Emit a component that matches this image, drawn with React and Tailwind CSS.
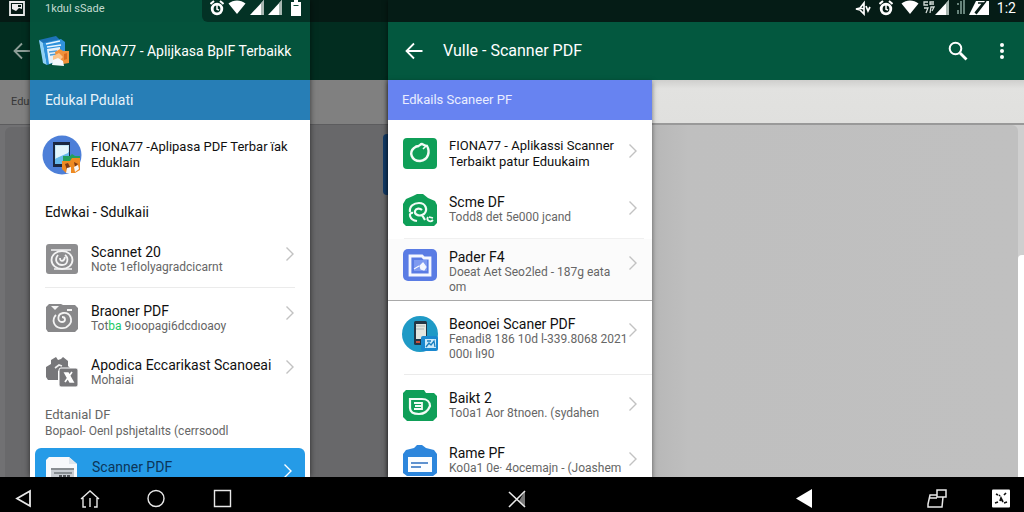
import React from "react";

// ── Small shared glyphs ──────────────────────────────────────────────────────
const Chevron = ({ className = "text-[#c2c2c2]" }) => (
  <svg viewBox="0 0 10 16" className={`h-4 w-2.5 ${className}`} fill="none" stroke="currentColor" strokeWidth="1.4">
    <path d="M1.5 1.5 8 8l-6.5 6.5" />
  </svg>
);

const BackArrow = ({ className }) => (
  <svg viewBox="0 0 18 18" className={`h-[18px] w-[18px] shrink-0 ${className}`} fill="none" stroke="currentColor" strokeWidth="1.8">
    <path d="M17.5 9H2M9 1.5 1.5 9 9 16.5" />
  </svg>
);

const AlarmIcon = () => (
  <svg viewBox="0 0 14 16" className="h-4 w-3.5" fill="none" stroke="currentColor">
    <circle cx="7" cy="9" r="4.8" strokeWidth="2.8" />
    <path d="M7 5v4.200l2 1" strokeWidth="1.5" />
    <path d="M0.500 4 4 1M13.500 4 10 1" strokeWidth="2" />
  </svg>
);

const WifiIcon = () => (
  <svg viewBox="0 0 18 14" className="h-3.5 w-[18px]" fill="currentColor">
    <path d="M0.5 3.5C5.500 -0.400 12.500 -0.400 17.500 3.500L9 14Z" />
  </svg>
);

const SignalIcon = () => (
  <svg viewBox="0 0 14 15" className="h-[15px] w-3.5">
    <path d="M14 0v15H0Z" fill="#fff" />
    <path d="M11 3.200 14 0v15h-3Z" fill="#a8b8b2" />
  </svg>
);

const BatteryIcon = () => (
  <svg viewBox="0 0 12 16" className="h-4 w-3" fill="currentColor">
    <path d="M4 0h4v2h3v14H1V2h3Z" />
    <path d="M3.500 5.500h5" stroke="#0b4a36" strokeWidth="1" />
  </svg>
);

// ── App icons ────────────────────────────────────────────────────────────────
const BooksLogo = () => (
  <svg viewBox="0 0 32 32" className="h-8 w-8 shrink-0">
    <path d="M1 5 18 1l3 3v20L7 29Z" fill="#1d73b8" />
    <path d="M1 5 5 8l4 22-4-2Z" fill="#8fd0f5" />
    <path d="m5 8 18-4 4 3v17L9 30Z" fill="#2f92dc" />
    <path d="m8 9 14-3M9 12l14-2" stroke="#e9f6ff" strokeWidth="1.6" />
    <path d="m9 14 13-2v13l-11 4Z" fill="#e5f1fa" />
    <path d="m11 17 8-1M12 20l7-1" stroke="#4b9cd8" strokeWidth="1.300" />
    <path d="m17 17 5-3 3 2h6v12l-12 2Z" fill="#f0913a" />
    <path d="m15 21 6-3 4 4-4 4-6-1Z" fill="#fbc48a" />
    <path d="m14 30 1-5 5-2 5 3 1 5Z" fill="#f3f8fd" />
    <path d="m26 19 3-1v6l-3 1Z" fill="#d86a20" />
  </svg>
);

const PhoneLogo = () => (
  <svg viewBox="0 0 40 40" className="h-10 w-10">
    <circle cx="20" cy="20" r="19.500" fill="#4d7fd8" />
    <path d="M11 7h17v25H11Z" fill="#1b2740" />
    <path d="M13 10h14v19H13Z" fill="#bfe6f7" />
    <path d="m13 24 14-7v12H13Z" fill="#67b9ea" />
    <path d="M14 11h12v7l-12 5Z" fill="#e4f5fb" />
    <path d="M21 21h7l2-2 3 2h5v8H21Z" fill="#23a05c" />
    <path d="M20 26h8l2-3h8v12l-5 3h-9l-4-4Z" fill="#ee8a22" />
    <path d="m23 29 3-1 2 4-3 3ZM32 27l4 2-3 3Z" fill="#7d3b16" />
    <path d="m25 33 4-1v6h-5ZM32 32l4-2 1 4-4 3Z" fill="#f5f7fb" />
  </svg>
);

const GrayLens = () => (
  <svg viewBox="0 0 32 30" className="h-[30px] w-8" fill="none" stroke="#f4f4f4">
    <rect width="32" height="30" rx="3" fill="#8e8e90" stroke="none" />
    <path d="M5 6h20M8 25h18" strokeWidth="1.300" />
    <ellipse cx="16" cy="16" rx="10.500" ry="9" strokeWidth="1.800" />
    <path d="M12 11c-4 5-1 10 4 10 6 0 7-7 3-10" strokeWidth="1.800" />
    <path d="M14 14c0 4 4 4 5-1" strokeWidth="1.800" />
  </svg>
);

const GraySpiral = () => (
  <svg viewBox="0 0 32 30" className="h-[30px] w-8" fill="none" stroke="#f4f4f4">
    <path d="M3 1h12l2 1h12l3 3v21l-3 3H2l-2-3V4Z" fill="#88888a" stroke="none" />
    <path d="M5 3h8l-4 4Z" fill="#f4f4f4" stroke="none" />
    <path d="M21 7h5" strokeWidth="2" />
    <path d="M16 14c4 0 4 5 0 5-5 0-5-8 1-9 8-1 10 8 6 12-4 5-13 4-15-2-1-3 0-6 2-8" strokeWidth="1.800" />
  </svg>
);

const GrayBoxes = () => (
  <svg viewBox="0 0 32 32" className="h-8 w-8">
    <path d="M0 10 5 7V3l5-3 2 3 3-1 2-2 5 4v5l2 2-12 3v9H2l-2-3Z" fill="#77777a" />
    <path d="m9 11 4-3 3 1" stroke="#eee" strokeWidth="1.600" fill="none" />
    <rect x="13" y="11" width="19" height="19" rx="2" fill="#77777a" stroke="#fff" strokeWidth="1" />
    <path d="M19 16h3l5 9h-3ZM26 15l-7 10" stroke="#fff" strokeWidth="1.700" fill="#fff" />
  </svg>
);

const DocumentIcon = () => (
  <svg viewBox="0 0 32 40" className="h-10 w-8">
    <path d="M3 0h20l8 7v33H0V3Z" fill="#f7f9fb" />
    <path d="M23 0v7h8Z" fill="#dfe6ec" />
    <path d="M5 11h23v24H5Z" fill="#c7ccd1" />
    <path d="M5 12h23M8 16h18" stroke="#74797d" strokeWidth="1.300" />
    <path d="M13 19h12" stroke="#55595d" strokeWidth="2" strokeDasharray="3 1" />
  </svg>
);

const GreenRing = () => (
  <svg viewBox="0 0 34 32" className="h-8 w-[34px]" fill="none">
    <rect y="1" width="34" height="31" rx="4" fill="#0f9f58" />
    <path d="M15 9c2 0 2-2 4-2 2 1 3 2 5 2 3 5 2 14-7 15-9 0-11-9-6-13 2-2 3-2 5-2" stroke="#f3fbf6" strokeWidth="2.400" />
    <path d="m20 12 3-3" stroke="#f3fbf6" strokeWidth="1.600" />
  </svg>
);

const GreenHouse = () => (
  <svg viewBox="0 0 34 32" className="h-8 w-[34px]" fill="none" stroke="#f3fbf6" strokeWidth="2.200">
    <path d="m0 10 3-5 7-3 4-2h6l5 4 7 3 2 4v18l-3 3H3l-3-3Z" fill="#0f9f58" stroke="none" />
    <path d="M14 27C6 26 5 18 10 19M7 18c-1-6 4-9 9-9 7 0 9 7 5 11-4 3-10 1-9-3 1-3 5-3 7-1M19 21l3 5" />
    <path d="M25 23c-2 3 2 6 5 3M26 23l4 1" strokeWidth="1.800" />
  </svg>
);

const BluePage = () => (
  <svg viewBox="0 0 34 32" className="h-8 w-[34px]">
    <rect width="34" height="32" rx="5" fill="#5a7ce4" />
    <path d="M7 7h12l2 2h6v17H7Z" fill="none" stroke="#f5f8ff" strokeWidth="2.800" />
    <path d="M11 11h13v11H11Z" fill="#7e9af0" />
    <path d="m11 20 5-3M17 17l3-3 3 4-2 3-3-1Z" stroke="#f5f8ff" strokeWidth="1.200" fill="#f5f8ff" />
  </svg>
);

const CyanPhone = () => (
  <svg viewBox="0 0 36 36" className="h-9 w-9">
    <circle cx="18" cy="18" r="18" fill="#1f9ac6" />
    <rect x="12" y="5" width="13" height="24" rx="1.500" fill="#243746" />
    <path d="M14 8h10v15H14Z" fill="#e3e6e0" />
    <path d="M14 10h9M14 13h8" stroke="#aeb8b6" strokeWidth="1" />
    <path d="M14 25h4v2h-4Z" fill="#c8503c" />
    <rect x="19" y="20" width="17" height="15" rx="2" fill="#1a88cf" />
    <path d="M23 23h11v9H23Z" fill="#cdeafa" />
    <path d="m24 31 3-4 2 2 3-4 1 6M25 25h4" stroke="#1a7fc0" strokeWidth="1.300" fill="none" />
  </svg>
);

const GreenFolder = () => (
  <svg viewBox="0 0 34 32" className="h-8 w-[34px]" fill="none" stroke="#f3fbf6" strokeWidth="2.200">
    <path d="M3 0h18l2 3h8l3 3v21l-4 4H4l-4-4V3Z" fill="#0f9f58" stroke="none" />
    <path d="M7 9h12c5 0 8 3 8 7-2 5-6 8-11 8-6 0-9-2-9-6Z" />
    <path d="M11 13h8v6h-8M12 16h7" strokeWidth="1.800" />
  </svg>
);

const BlueCase = () => (
  <svg viewBox="0 0 34 32" className="h-8 w-[34px]">
    <path d="M0 9 3 5l8-2 3-3h5l4 3 8 2 3 4v19l-4 3H4l-4-3Z" fill="#2d86dc" />
    <path d="M5 12h24v15H5Z" fill="#fbfdff" />
    <path d="M8 18h17M8 22h10" stroke="#2d6fc0" strokeWidth="1.700" />
  </svg>
);

// ── One tappable entry of a drawer list ──────────────────────────────────────
const Entry = ({ icon, title, children, chevron = true, wide = false, className = "" }) => (
  <button type="button" className={`flex w-full items-start text-left ${wide ? "gap-[11px] pl-3.5 pr-3.5" : "gap-[9px] px-3"} ${className}`}>
    <span className={`flex shrink-0 justify-center ${wide ? "w-9" : "w-10"}`}>{icon}</span>
    <span className="min-w-0 flex-1">
      <span className="block whitespace-nowrap text-[14px] leading-4 text-[#101010]">{title}</span>
      {children && <span className="block whitespace-nowrap text-[12px] leading-[15px] text-[#666]">{children}</span>}
    </span>
    {chevron && (
      <span className={`flex shrink-0 items-center ${wide ? "h-7" : "-mr-px h-5 pr-1"}`}>
        <Chevron />
      </span>
    )}
  </button>
);

const LeftDrawer = () => (
  <aside className="z-10 flex w-[280px] shrink-0 flex-col bg-white shadow-[0_0_6px_rgba(0,0,0,0.6)]">
    <div className="flex h-[22px] shrink-0 justify-between bg-[#04513b] pl-[15px] text-[11px] leading-[18px] text-[#c3dad1]">
      <span>1kdul sSade</span>
      <div className="flex h-[22px] items-start gap-1 rounded-bl-md bg-[#033225] pl-2 pr-2 text-white">
        <AlarmIcon />
        <WifiIcon />
        <SignalIcon />
        <SignalIcon />
        <span className="pl-1"><BatteryIcon /></span>
      </div>
    </div>
    <header className="flex h-[58px] shrink-0 items-center gap-2.5 bg-[#04533c] pl-2 text-white">
      <BooksLogo />
      <h1 className="whitespace-nowrap text-[14px]">FIONA77 - Aplijkasa BpIF Terbaikk</h1>
    </header>
    <h2 className="flex h-10 shrink-0 items-center bg-[#277eb6] pl-[15px] text-[14px] text-[#e6f2fa]">Edukal Pdulati</h2>

    <Entry icon={<PhoneLogo />} chevron={false} className="pt-[15px]"
      title={<span className="block pt-1 text-[13px]">FIONA77 -Aplipasa PDF Terbar ïak<br />Eduklain</span>} />
    <h3 className="pl-[15px] pt-7 text-[14px] leading-[18px] text-[#101010]">Edwkai - Sdulkaii</h3>

    <Entry icon={<GrayLens />} title="Scannet 20" className="pb-3 pt-[23px]">Note 1efIolyagradcicarnt</Entry>
    <hr className="mx-[15px] shrink-0 border-[#ebebeb]" />
    <Entry icon={<GraySpiral />} title="Braoner PDF" className="pt-[15px]">
      Tot<span className="text-[#20c868]">ba</span> 9ıoopagi6dcdıoaoy
    </Entry>
    <Entry icon={<GrayBoxes />} title="Apodica Eccarikast Scanoeai" className="pt-[23px]">Mohaiai</Entry>

    <p className="whitespace-nowrap pl-[15px] pt-[18px] text-[13px] leading-4 text-[#666]">
      Edtanial DF<br />
      <span className="text-[12px]">Bopaol- Oenl pshjetalıts (cerrsoodl</span>
    </p>
    <button type="button" className="mx-[5px] mt-[9px] flex h-16 shrink-0 items-start gap-3.5 rounded-t-md bg-[#259be7] pl-[11px] pr-3 pt-[9px] text-left">
      <DocumentIcon />
      <span className="flex-1 text-[14px] leading-5 text-[#0c3558]">Scanner PDF</span>
      <span className="flex h-7 items-center"><Chevron className="text-white" /></span>
    </button>
  </aside>
);

const RightDrawer = () => (
  <aside className="z-10 flex w-[264px] shrink-0 flex-col bg-white shadow-[0_2px_5px_rgba(0,0,0,0.5)]">
    <h2 className="flex h-10 shrink-0 items-center bg-[#6783f1] pl-3.5 text-[13px] text-[#e9edff]">Edkails Scaneer PF</h2>
    <Entry wide icon={<GreenRing />} className="pb-4 pt-[17px]"
      title={<span className="block pt-px text-[13px]">FIONA77 - Aplikassi Scanner<br />Terbaikt patur Eduukaim</span>} />
    <Entry wide icon={<GreenHouse />} title="Scme DF" className="pb-3 pt-2">Todd8 det 5e000 jcand</Entry>
    <hr className="ml-4 mr-2 shrink-0 border-[#f0f0f0]" />
    <Entry wide icon={<BluePage />} title="Pader F4" className="border-b border-[#a9a9a9] bg-[#fbfbfb] pb-[5px] pt-[10px]">
      Doeat Aet Seo2led - 187g eata<br />om
    </Entry>
    <Entry wide icon={<CyanPhone />} title="Beonoei Scaner PDF" className="pb-3 pt-[15px]">
      Fenadi8 186 10d l-339.8068 2021<br />000ı lı90
    </Entry>
    <hr className="ml-4 shrink-0 border-[#ebebeb]" />
    <Entry wide icon={<GreenFolder />} title="Baikt  2" className="pt-[15px]">To0a1 Aor 8tnoen. (sydahen</Entry>
    <Entry wide icon={<BlueCase />} title="Rame PF" className="pt-[23px]">Ko0a1 0e· 4ocemajn - (Joashem</Entry>
  </aside>
);

// ── Dimmed page that shows beside the left drawer ────────────────────────────
const DimmedPage = ({ className, label, icon, back, children }) => (
  <div className={`flex shrink-0 flex-col overflow-hidden ${className}`}>
    <div className="h-[22px] shrink-0 bg-[#051a14]">{icon}</div>
    <div className="flex h-[58px] shrink-0 items-center bg-[#022d20] pl-[13px]">{back}</div>
    <div className="flex h-[45px] shrink-0 items-center border-b border-[#5c5c5e] bg-[#808080] pl-[11px] text-[11px] text-[#373737]">{label}</div>
    {children}
  </div>
);

const Toolbar = () => (
  <header className="flex h-[58px] shrink-0 items-center bg-[#03583f] pl-[17px] pr-3 text-white">
    <button type="button" aria-label="Back"><BackArrow className="text-white" /></button>
    <h1 className="flex-1 whitespace-nowrap pl-5 text-[16px]">Vulle - Scanner PDF</h1>
    <button type="button" aria-label="Search" className="mr-6">
      <svg viewBox="0 0 20 20" className="h-5 w-5" fill="none" stroke="currentColor">
        <circle cx="7.500" cy="7.500" r="5.800" strokeWidth="2" />
        <path d="m12 12 6.500 6.500" strokeWidth="2.800" />
      </svg>
    </button>
    <button type="button" aria-label="More options" className="flex w-5 flex-col items-center gap-0.5">
      <span className="h-1 w-1 rounded-full bg-white" />
      <span className="h-1 w-1 rounded-full bg-white" />
      <span className="h-1 w-1 rounded-full bg-white" />
    </button>
  </header>
);

const StatusBar = () => (
  <div className="flex h-[22px] shrink-0 items-start justify-end gap-2 bg-[#051c16] pr-2 text-white">
    <svg viewBox="0 0 16 16" className="h-4 w-4" fill="none" stroke="currentColor" strokeWidth="1.700">
      <path d="m1 9 4-1 4-5v11L5 10ZM5 8l4 1M11 6l2 5 2-4" />
    </svg>
    <AlarmIcon />
    <WifiIcon />
    <div className="-ml-1 flex">
      <svg viewBox="0 0 12 14" className="h-3.5 w-3" fill="none" stroke="#d4ddd9" strokeWidth="1.300">
        <path d="M5 2H1v3h4M7 5V2h4M7 4h4M1 8h4l-2 5M7 13l1-6h3l-2 4" />
      </svg>
      <SignalIcon />
    </div>
    <svg viewBox="0 0 8 14" className="h-3.5 w-2" fill="#66837a">
      <path d="M0 10h2v4H0ZM3 1h2v13H3ZM6 0h2v14H6ZM0 3h2v2H0Z" />
    </svg>
    <svg viewBox="0 0 20 15" className="-ml-1 h-[15px] w-5">
      <path d="M7 1h13v14H0Z" fill="#fff" />
      <path d="M17 1 7 14M9 3h5L6 13" stroke="#051c16" strokeWidth="1.500" fill="none" />
    </svg>
    <span className="text-[14px] leading-[17px]">1:2</span>
  </div>
);

// ── Bottom navigation ────────────────────────────────────────────────────────
const NavButton = ({ label, className = "", children }) => (
  <button type="button" aria-label={label} className={`flex h-8 w-8 items-center justify-center ${className}`}>
    <svg viewBox="0 0 20 20" className="h-5 w-5" fill="none" stroke="#e8e8e8" strokeWidth="1.400">{children}</svg>
  </button>
);

const NavBar = () => (
  <nav className="grid h-[35px] shrink-0 grid-cols-[1fr_auto_1fr] items-center bg-black pt-1.5">
    <div className="flex gap-[34px] pl-2">
      <NavButton label="Back"><path d="M16 2v15L3 9.500Z" strokeWidth="1.800" /></NavButton>
      <NavButton label="Home"><path d="m1 10 9-8 9 8M3 9v9h3M17 9v9h-3M10 9v9" /></NavButton>
      <NavButton label="Circle"><circle cx="10" cy="9.500" r="8" /></NavButton>
      <NavButton label="Recent apps"><path d="M2.500 1.500h16v16h-16Z" /></NavButton>
    </div>
    <NavButton label="Close" className="ml-2.5">
      <path d="M18 2v16l-6-6Z" fill="#777" stroke="none" />
      <path d="m2 3 16 15M18 2 2 18" strokeWidth="1.600" />
    </NavButton>
    <div className="flex justify-end gap-8 pr-[7px]">
      <NavButton label="Previous" className="mr-[68px]"><path d="M17 0v19L1 9.500Z" fill="#fff" stroke="none" /></NavButton>
      <NavButton label="Switch window"><path d="M10 1h9v7h-3l-1 10H1v-3l2-9h7ZM10 6v2h6M3 9h7" strokeWidth="1.500" /></NavButton>
      <NavButton label="Faces">
        <rect x="1" y="0.500" width="18" height="18" rx="1" fill="#fff" stroke="none" />
        <path d="m5 5 2 1M13 6l2-2M4 14l3-1M13 14l3-1M9 12l1-3 2 4M8 6l1 1" stroke="#111" strokeWidth="1.700" />
      </NavButton>
    </div>
  </nav>
);

const App = () => (
  <div className="flex h-screen flex-col overflow-hidden bg-[#bfbfbf] font-['Roboto',sans-serif]">
    <div className="flex min-h-0 flex-1 overflow-hidden">
      <DimmedPage
        className="w-[30px] bg-[#717173]"
        label="Edu"
        icon={
          <svg viewBox="0 0 16 16" className="ml-[9px] h-4 w-4">
            <path d="M1 2h14v13H1Z" fill="none" stroke="#eee" strokeWidth="1.800" />
            <path d="M3 4h10v5l-3-1-3 3-4-2Z" fill="#eee" />
            <path d="M9 5h3v2H9Z" fill="#051a14" />
          </svg>
        }
        back={<BackArrow className="text-[#8d9e97]" />}
      >
        <div className="ml-[5px] mt-0.5 flex-1 rounded-tl-md bg-[#69696b]" />
      </DimmedPage>

      <LeftDrawer />

      <DimmedPage className="w-[78px] bg-[#68686a]">
        <div className="mt-[9px] h-[61px] w-[5px] self-end rounded-l bg-[#123c68]" />
      </DimmedPage>

      <main className="flex min-w-0 flex-1 flex-col shadow-[0_0_5px_rgba(0,0,0,0.6)]">
        <StatusBar />
        <Toolbar />
        <div className="flex min-h-0 flex-1">
          <RightDrawer />
          <div className="flex min-w-0 flex-1 flex-col">
            <div className="h-[45px] shrink-0 border-b-2 border-[#999] bg-gradient-to-b from-[#cfcfcd] via-[#e2e2e0] via-20% to-[#e0e0de]" />
            <div className="flex flex-1 bg-[#cfcfcf]">
              <div className="flex-1 rounded-tr-md bg-gradient-to-r from-[#b7b7b7] via-[#bfbfbf] via-10% to-[#c0c0c0]" />
              <div className="flex w-1.5 flex-col pt-[130px]">
                <div className="flex-1 rounded-tl-sm bg-white" />
              </div>
            </div>
          </div>
        </div>
      </main>
    </div>
    <NavBar />
  </div>
);

export default App;
